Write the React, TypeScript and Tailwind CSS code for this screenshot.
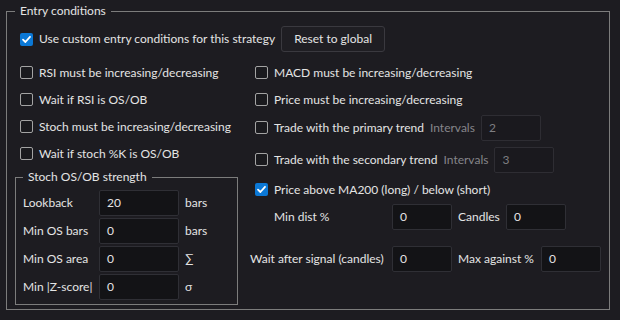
import React from "react";

function Check({ checked = false }: { checked?: boolean }) {
  return checked ? (
    <span className="flex h-[13px] w-[13px] shrink-0 items-center justify-center rounded-[2px] bg-[#0b78d6]">
      <svg width="11" height="11" viewBox="0 0 11 11" fill="none">
        <path d="M2 5.6 L4.4 8 L9 2.8" stroke="#ffffff" strokeWidth="1.8" strokeLinecap="round" strokeLinejoin="round" />
      </svg>
    </span>
  ) : (
    <span className="block h-[13px] w-[13px] shrink-0 rounded-[2px] border border-[#a3a3a3] bg-[#1a1a1e]" />
  );
}

function CheckRow({ label, checked = false, children }: { label: string; checked?: boolean; children?: React.ReactNode }) {
  return (
    <div className="flex h-[27px] items-center gap-[6px]">
      <Check checked={checked} />
      <span className="whitespace-nowrap">{label}</span>
      {children}
    </div>
  );
}

function Field({ value, disabled = false, w = "w-[60px]" }: { value: string; disabled?: boolean; w?: string }) {
  return (
    <div
      className={`flex h-[26px] ${w} shrink-0 items-center rounded-[2px] border px-[7px] ${
        disabled ? "border-[#2e2d33] bg-[#1a191e] text-[#7e7e82]" : "border-[#2f2f35] bg-[#131316] text-[#e4e4e4]"
      }`}
    >
      {value}
    </div>
  );
}

export default function App() {
  return (
    <div className="h-[320px] w-[620px] bg-[#1d1c21] pl-[6px] pt-[3px] font-['Lato',sans-serif] text-[12px] leading-[16px] text-[#e4e4e4]">
      <fieldset className="m-0 h-[307px] w-[604px] border border-[#7c7c7c] px-[8px] pb-0 pt-0">
        <legend className="px-[5px] leading-[16px]">Entry conditions</legend>
        <div className="pl-[5px] pt-[7px]">
          <div className="flex h-[26px] items-center gap-[6px]">
            <Check checked />
            <span className="whitespace-nowrap">Use custom entry conditions for this strategy</span>
            <button className="h-[26px] w-[104px] rounded-[3px] border border-[#3a393f] bg-[#1f1e23] text-[12px] text-[#e4e4e4]">
              Reset to global
            </button>
          </div>

          <div className="mt-[7px] flex">
            <div className="flex w-[235px] flex-col">
              <CheckRow label="RSI must be increasing/decreasing" />
              <CheckRow label="Wait if RSI is OS/OB" />
              <CheckRow label="Stoch must be increasing/decreasing" />
              <CheckRow label="Wait if stoch %K is OS/OB" />
              <fieldset className="m-0 -ml-[5px] mt-[2px] h-[136px] w-[223px] border border-[#7c7c7c] px-[7px] pb-0 pt-0">
                <legend className="px-[5px] leading-[16px]">Stoch OS/OB strength</legend>
                <div className="flex flex-col gap-[2px] pt-[5px]">
                  {[
                    ["Lookback", "20", "bars"],
                    ["Min OS bars", "0", "bars"],
                    ["Min OS area", "0", "∑"],
                    ["Min |Z-score|", "0", "σ"],
                  ].map(([l, v, u]) => (
                    <div key={l} className="flex h-[26px] items-center">
                      <span className="w-[76px] whitespace-nowrap">{l}</span>
                      <Field value={v} w="w-[80px]" />
                      <span className="ml-[6px]">{u}</span>
                    </div>
                  ))}
                </div>
              </fieldset>
            </div>

            <div className="flex flex-col">
              <CheckRow label="MACD must be increasing/decreasing" />
              <CheckRow label="Price must be increasing/decreasing" />
              <div className="mt-[1px]">
                <CheckRow label="Trade with the primary trend">
                  <span className="text-[#85858a]">Intervals</span>
                  <Field value="2" disabled />
                </CheckRow>
              </div>
              <div className="mt-[5px]">
                <CheckRow label="Trade with the secondary trend">
                  <span className="text-[#85858a]">Intervals</span>
                  <Field value="3" disabled />
                </CheckRow>
              </div>
              <div className="mt-[3px]">
                <CheckRow label="Price above MA200 (long) / below (short)" checked />
              </div>
              <div className="mt-[1px] flex h-[26px] items-center gap-[6px] pl-[19px]">
                <span className="w-[112px]">Min dist %</span>
                <Field value="0" />
                <span className="w-[42px] whitespace-nowrap">Candles</span>
                <Field value="0" />
              </div>
              <div className="-ml-[5px] mt-[16px] flex h-[26px] items-center gap-[6px]">
                <span className="w-[136px] whitespace-nowrap">Wait after signal (candles)</span>
                <Field value="0" />
                <span className="w-[77px] whitespace-nowrap">Max against %</span>
                <Field value="0" />
              </div>
            </div>
          </div>
        </div>
      </fieldset>
    </div>
  );
}
